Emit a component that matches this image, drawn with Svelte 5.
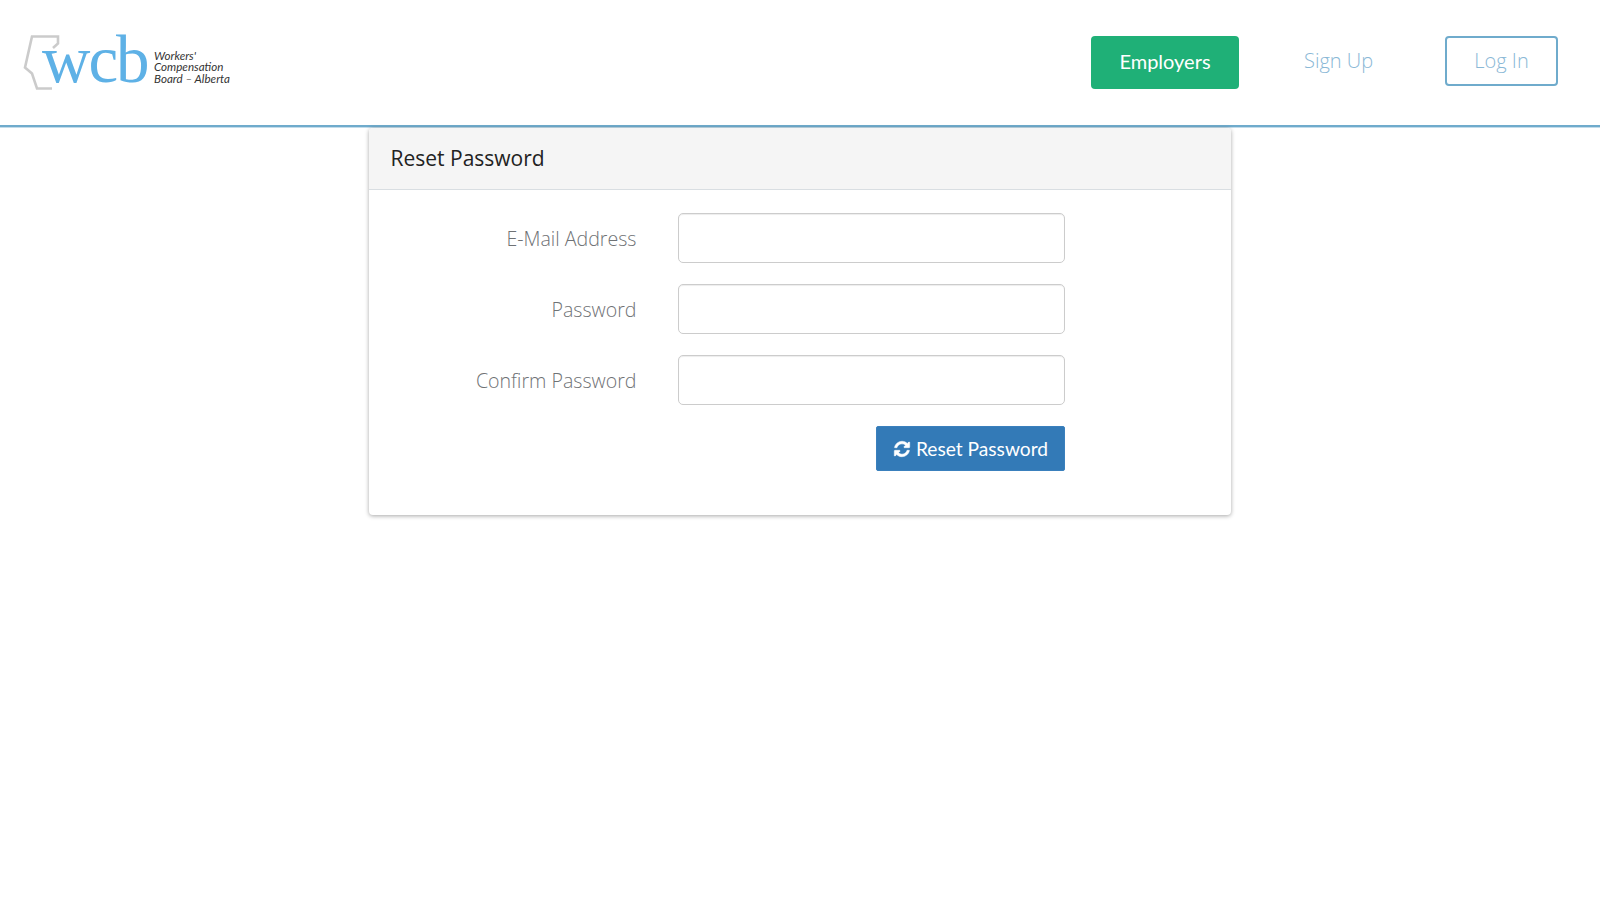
<script>
    const fields = [
        { id: 'email', label: 'E-Mail Address', type: 'email' },
        { id: 'password', label: 'Password', type: 'password' },
        { id: 'confirm', label: 'Confirm Password', type: 'password' }
    ];
</script>

<header class="topbar">
    <a class="logo" href="#top">
        <svg class="province" viewBox="0 0 60 60" width="60" height="60" aria-hidden="true">
            <path d="M30 15 L35 10.5 V3.5 H9 L2 34.5 L9 40.5 L14 55.5 H29" fill="none" stroke="#cbcbcb" stroke-width="2.6" />
        </svg>
        <span class="wcb">wcb</span>
        <span class="tagline">Workers'<br />Compensation<br />Board – Alberta</span>
    </a>
    <nav class="nav">
        <a class="employers" href="#top">Employers</a>
        <a class="signup" href="#top">Sign Up</a>
        <a class="login" href="#top">Log In</a>
    </nav>
</header>

<main class="content">
    <section class="card">
        <div class="card-head">Reset Password</div>
        <form class="card-body">
            {#each fields as field (field.id)}
                <div class="row">
                    <label for={field.id}>{field.label}</label>
                    <input id={field.id} type={field.type} />
                </div>
            {/each}
            <div class="row">
                <span></span>
                <div class="actions">
                    <button type="button" class="submit">
                        <svg viewBox="0 0 1792 1792" width="18" height="18" aria-hidden="true">
                            <path fill="currentColor" stroke="currentColor" stroke-width="50" d="M1639 1056q0 5-1 7-64 268-268 434.5t-478 166.5q-146 0-282.5-55t-243.5-157l-129 129q-19 19-45 19t-45-19-19-45v-448q0-26 19-45t45-19h448q26 0 45 19t19 45-19 45l-137 137q71 66 161 102t187 36q134 0 250-65t186-179q11-17 53-117 8-23 30-23h192q13 0 22.5 9.5t9.5 22.5zm25-800v448q0 26-19 45t-45 19h-448q-26 0-45-19t-19-45 19-45l138-138q-148-137-349-137-134 0-250 65t-186 179q-11 17-53 117-8 23-30 23h-199q-13 0-22.5-9.5t-9.5-22.5v-7q65-268 270-434.5t480-166.5q146 0 284 55.5t245 156.5l130-129q19-19 45-19t45 19 19 45z" />
                        </svg>
                        Reset Password
                    </button>
                </div>
            </div>
        </form>
    </section>
</main>

<style>
    :global(body) {
        margin: 0;
        background: #fff;
        font-family: "Open Sans", sans-serif;
    }

    a {
        text-decoration: none;
    }

    .topbar {
        display: flex;
        justify-content: space-between;
        align-items: center;
        height: 125px;
        padding: 0 42px 0 23px;
        border-bottom: 2px solid #6fabcc;
        box-shadow: 0 1px 0 #c3dcea;
    }

    .logo {
        display: flex;
        align-items: flex-start;
        position: relative;
        width: 210px;
        height: 62px;
        margin-top: -2px;
    }

    .province {
        position: absolute;
        left: 0;
        top: 2px;
    }

    .wcb {
        position: absolute;
        left: 19px;
        top: -16px;
        font-family: "Liberation Serif", serif;
        font-size: 67px;
        line-height: 88px;
        letter-spacing: -2px;
        color: #5eb1e6;
    }

    .tagline {
        position: absolute;
        left: 131px;
        top: 19px;
        font-family: "Lato", sans-serif;
        font-style: italic;
        font-size: 11.6px;
        line-height: 11.5px;
        color: #333;
        white-space: nowrap;
    }

    .nav {
        display: flex;
        align-items: center;
    }

    .employers {
        display: flex;
        align-items: center;
        justify-content: center;
        box-sizing: border-box;
        width: 148px;
        height: 53px;
        margin-bottom: 1px;
        padding-bottom: 2px;
        background: #1fb077;
        border-radius: 4px;
        color: #fff;
        font-family: "Lato", sans-serif;
        font-size: 20px;
    }

    .signup {
        width: 68px;
        margin: 0 73px 4px 65px;
        text-align: center;
        color: #8ab8d6;
        font-weight: 300;
        font-size: 20px;
        white-space: nowrap;
    }

    .login {
        display: flex;
        align-items: center;
        justify-content: center;
        box-sizing: border-box;
        width: 113px;
        height: 50px;
        margin-bottom: 4px;
        border: 2px solid #6fabcc;
        border-radius: 4px;
        color: #8ab8d6;
        font-weight: 300;
        font-size: 20px;
    }

    .content {
        display: flex;
        justify-content: center;
        min-height: 780px;
    }

    .card {
        box-sizing: border-box;
        width: 862px;
        height: 387px;
        margin: 1px 1px 0 0;
        background: #fff;
        border-radius: 4px;
        box-shadow: 0 1px 4px rgba(0, 0, 0, 0.35);
    }

    .card-head {
        box-sizing: border-box;
        height: 62px;
        padding: 0 22px 2px;
        display: flex;
        align-items: center;
        background: #f5f5f5;
        border-bottom: 1px solid #d9dee2;
        border-radius: 4px 4px 0 0;
        color: #222;
        font-size: 21px;
    }

    .card-body {
        display: flex;
        flex-direction: column;
        gap: 21px;
        padding-top: 23px;
    }

    .row {
        display: grid;
        grid-template-columns: 268px 387px;
        column-gap: 41px;
        align-items: center;
    }

    label {
        text-align: right;
        color: #6f7275;
        font-weight: 300;
        font-size: 19.6px;
    }

    input {
        box-sizing: border-box;
        height: 50px;
        width: 100%;
        border: 1px solid #ccc;
        border-radius: 5px;
        background: #fff;
        box-shadow: inset 0 1px 1px rgba(0, 0, 0, 0.075);
    }

    .actions {
        display: flex;
        justify-content: flex-end;
    }

    .submit {
        display: flex;
        align-items: center;
        gap: 5px;
        box-sizing: border-box;
        width: 189px;
        height: 45px;
        padding: 0 0 0 1px;
        justify-content: center;
        background: #337ab7;
        border: 1px solid #3a80bd;
        border-radius: 2px;
        color: #fff;
        font-family: "Lato", sans-serif;
        font-size: 19.2px;
    }
</style>
